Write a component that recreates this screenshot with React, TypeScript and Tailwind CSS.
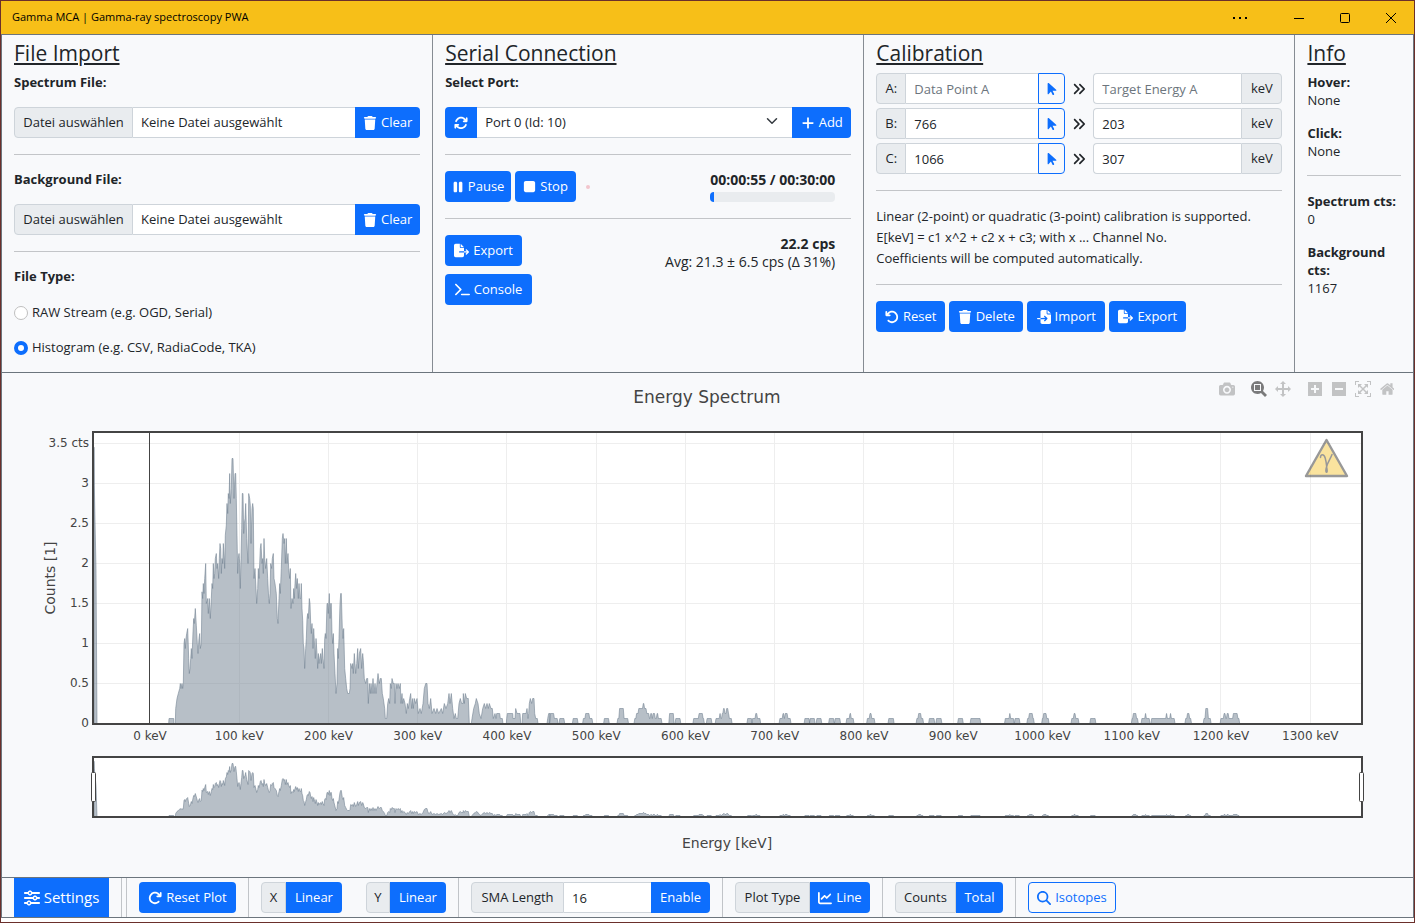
import { Fragment, type ReactNode } from "react";
import {
  FaAnglesRight,
  FaArrowPointer,
  FaArrowRotateLeft,
  FaArrowRotateRight,
  FaArrowsRotate,
  FaChartLine,
  FaFileExport,
  FaFileImport,
  FaMagnifyingGlass,
  FaPause,
  FaPlus,
  FaSliders,
  FaStop,
  FaTerminal,
  FaTrash,
} from "react-icons/fa6";

type Point = [number, number];

/* ---------- Spectrum trace ---------- */

const BASE_Y = 723.5;

// Pairs of "offset,height"; both in thirds of a chart unit.
const LOW_ENERGY =
  "162,829 163,715 168,465 171,0 386,0 387,15 401,15 402,0 406,0 407,45 411,75 415,90 419,105 421,120 423,105 426,120 428,105 430,120 432,240 434,255 436,225 438,255 440,270 443,285 446,195 448,150 450,165 452,195 454,225 456,195 459,275 461,315 463,300 466,345 469,295 472,240 474,210 477,255 479,270 481,225 484,240 486,395 488,375 490,420 492,390 494,435 497,480 499,360 503,375 505,330 508,375 511,315 514,375 516,420 518,405 520,480 522,435 524,450 526,495 529,510 531,465 533,480 536,435 538,495 540,540 542,525 544,450 546,495 548,480 550,540 552,510 554,465 556,565 559,595 561,660 563,630 565,690 567,675 569,750 571,660 574,705 576,795 579,795 582,675 585,750 587,750 589,675 591,565 593,450 595,495 597,510 599,480 601,405 603,495 605,585 607,690 609,690 611,570 613,600 615,615 617,660 620,555 624,480 626,690 629,675 631,655 633,540 636,645 638,660 640,645 642,435 645,465 648,405 650,360 653,405 655,465 657,435 659,480 661,525 663,540 666,480 668,495 670,450 672,555 674,495 677,465 680,495 683,435 686,375 688,360 690,390 692,480 695,465 697,495 700,510 702,435 705,420 709,390 712,315 714,300 717,375 719,420 721,390 724,465 727,555 729,570 732,540 734,555 736,480 739,555 741,480 744,510 746,465 749,435 751,465 753,345 756,375 759,360 761,405 763,375 765,420 767,450 770,405 772,435 775,375 777,420 780,375";

const MID_ENERGY =
  "32,375 34,420 36,345 38,310 40,240 42,225 44,165 47,225 49,255 51,315 53,330 55,315 58,375 60,360 62,300 64,270 66,300 69,225 71,285 73,250 76,195 78,255 81,210 83,165 85,210 87,180 89,195 92,210 94,180 97,225 99,195 102,165 104,255 106,270 108,255 111,360 113,360 115,330 118,390 120,315 122,360 124,360 126,270 128,240 130,270 132,210 135,150 138,90 141,120 143,225 145,195 147,255 150,360 152,390 154,390 157,285 159,255 161,285 164,165 167,135 170,105 173,90 178,90 180,105 182,180 186,165 188,180 190,150 193,210 195,180 197,150 200,180 203,225 205,165 208,210 212,225 215,165 218,210 220,190 223,135 227,120 230,135 233,135 235,60 238,120 241,90 243,120 246,90 249,135 252,90 255,120 258,90 261,120 264,150 268,120 271,135 274,135 277,90 280,75 284,45 286,15 290,15 293,60 296,75 299,60 301,120 304,105 306,135 310,120 313,120 315,60 318,120 321,105 324,120 328,105 331,120 333,60 336,90 338,60 341,75 345,60 349,30 352,60 355,45 359,75 362,90 365,45 368,75 370,45 373,75 377,60 381,75 385,30 390,45 394,30 399,60 403,105 407,120 411,120 414,60 418,45 422,75 426,30 432,45 437,30 441,45 446,30 454,45 458,30 463,60 468,45 473,60 477,90 480,60 484,90 488,45 492,15 496,30 499,15 503,15 507,60 511,75 515,60 519,60 520,90 523,60 526,90 530,75 535,75 538,0 544,0 546,15 551,45 556,60 559,75 564,60 568,30 573,15 578,45 583,60 587,45 591,60 595,45 598,60 603,45 607,45 610,15 615,30 618,15 620,30 629,30 631,15 637,15 639,0 649,0 650,15 652,30 668,30 669,15 675,15 677,45 681,30 690,30 692,0 696,0 698,30 708,30 711,45 714,15 716,30 718,60 721,75 725,60 728,75 732,75 734,30 737,15 742,15 744,0 771,0 773,15 776,30 780,30";

// Isolated groups above 450 keV: each group starts at the first offset and ends
// at the last number; every pair is "offset,counts" held until the next one.
const HIGH_ENERGY =
  "0,2 9,1 17|21,1 32|51,1 62|74,1 79,2 88,1 95|121,1 132|151,1 155,3 165,1 175|189,1 193,2 198,3 208,4 211,3 216,2 222,1 225,2 228,1 230,2 235,1 239,2 242,1 250|267,2 277,0 281,1 292|321,1 333,2 342,1 345|351,1 362|371,1 380,2 382,1 385,2 388,3 391,2 395,3 399,2 401,1 407|442,1 452|453,1 460,2 464,1 471|514,1 521,2 524,1 526,2 532,1 539|570,1 581|582,1 593|597,1 608|625,1 636|638,1 650|664,1 671,2 674,1 680|710,1 716,2 720,1 727|758,1 770|821,1 825,2 831,1 836|849,1 861|865,1 877|914,1 925|942,1 964|1019,1 1029,2 1031,1 1039|1041,1 1052|1069,1 1073,2 1081,1 1084|1102,1 1105,2 1112,1 1117|1168,1 1173,2 1177,1 1184|1210,1 1222|1303,1 1306,2 1313,1 1317|1325,1 1333,2 1335,1 1343|1347,1 1380,2 1382,1 1389,2 1391,1 1399|1423,1 1427,2 1432,1 1436|1464,1 1468,3 1474,1 1480|1502,1 1509,2 1513,1 1516,2 1520,1 1530,2 1540,1 1544";

function parseTrace(data: string, origin: number): Point[] {
  return data.split(" ").map((pair) => {
    const [x, h] = pair.split(",").map(Number);
    return [origin + x / 3, h / 3];
  });
}

function parseGroups(data: string): Point[] {
  const points: Point[] = [];
  for (const group of data.split("|")) {
    let height = 0;
    for (const item of group.split(" ")) {
      const [offset, counts = 0] = item.split(",").map(Number);
      const x = 550 + offset / 2.24;
      points.push([x - 0.4, height], [x + 0.4, counts * 5]);
      height = counts * 5;
    }
  }
  return points;
}

const TRACE: Point[] = [
  ...parseTrace(LOW_ENERGY, 40),
  ...parseTrace(MID_ENERGY, 290),
  ...parseGroups(HIGH_ENERGY),
];

function tracePath(base: number, scale: number) {
  const body = TRACE.map(([x, h]) => `L${x.toFixed(1)} ${(base - h * scale).toFixed(1)}`).join("");
  return `M94 ${base}${body}`;
}

const Y_TICKS = ["0", "0.5", "1", "1.5", "2", "2.5", "3", "3.5 cts"];
const X_TICKS = Array.from({ length: 14 }, (_, i) => i * 100);

function SpectrumChart() {
  return (
    <svg viewBox="2 373 1411 504" className="block w-full font-['DejaVu_Sans',sans-serif]" role="img" aria-label="Energy Spectrum">
      <text x="707" y="403" textAnchor="middle" fontSize="17" fill="#444">Energy Spectrum</text>
      <rect x="93" y="432" width="1269" height="292" fill="#fff" />
      <g stroke="#eee" shapeRendering="crispEdges">
        {Y_TICKS.map((t, i) => (
          <line key={t} x1="94" x2="1361" y1={BASE_Y - i * 40} y2={BASE_Y - i * 40} />
        ))}
        {X_TICKS.slice(1).map((t) => {
          const x = Math.floor(149.8 + t * 0.8925) + 0.5;
          return <line key={t} x1={x} x2={x} y1="433" y2="723" />;
        })}
      </g>
      <line x1="149.5" x2="149.5" y1="433" y2="723" stroke="#444" />
      <path d={tracePath(BASE_Y, 1)} fill="#708090" fillOpacity="0.5" stroke="#708090" strokeOpacity="0.7" strokeWidth="0.8" />
      <rect x="93" y="432" width="1269" height="292" fill="none" stroke="#444" strokeWidth="2" />

      <g fontSize="12" fill="#444">
        {Y_TICKS.map((t, i) => (
          <text key={t} x="89" y={727 - i * 40} textAnchor="end">{t}</text>
        ))}
        {X_TICKS.map((t) => (
          <text key={t} x={150 + t * 0.8925} y="740" textAnchor="middle">{`${t} keV`}</text>
        ))}
      </g>
      <g fontSize="14" fill="#444" textAnchor="middle">
        <text transform="translate(55 578) rotate(-90)">Counts [1]</text>
        <text x="727" y="848">Energy [keV]</text>
      </g>

      <g opacity="0.5" strokeLinejoin="round" strokeLinecap="round">
        <path d="M1326.5 440L1347 476H1306Z" fill="#f6c840" stroke="#333" strokeWidth="2.4" />
        <path d="M1320.5 457.5C1320.5 454 1324 453.5 1325.2 458C1326 461 1326.4 463 1326.6 466M1332 454.5C1330.5 458.5 1328 462 1326.8 466" fill="none" stroke="#333" strokeWidth="1.5" />
        <path d="M1326.6 464C1325.4 468 1324.8 470 1325.3 472C1325.8 473.4 1327.4 473.4 1327.8 472C1328.2 470 1327.4 467 1326.6 464Z" fill="#333" />
      </g>

      <rect x="93" y="757" width="1269" height="60" fill="#fff" />
      <path d={tracePath(816.5, 0.2)} fill="#708090" fillOpacity="0.5" stroke="#708090" strokeOpacity="0.7" strokeWidth="0.8" />
      <rect x="93" y="757" width="1269" height="60" fill="none" stroke="#444" strokeWidth="2" />
      <g fill="#fff" stroke="#444">
        <rect x="91.5" y="772.5" width="4" height="29" rx="1" />
        <rect x="1359.5" y="772.5" width="4" height="29" rx="1" />
      </g>
    </svg>
  );
}

/* ---------- Plot mode bar ---------- */

const MODE_ICONS = {
  camera: {
    width: 1000,
    d: "m500 450c-83 0-150-67-150-150 0-83 67-150 150-150 83 0 150 67 150 150 0 83-67 150-150 150z m400 150h-120c-16 0-34 13-39 29l-31 93c-6 15-23 28-40 28h-340c-16 0-34-13-39-28l-31-94c-6-15-23-28-40-28h-120c-55 0-100-45-100-100v-450c0-55 45-100 100-100h800c55 0 100 45 100 100v450c0 55-45 100-100 100z m-400-550c-138 0-250 112-250 250 0 138 112 250 250 250 138 0 250-112 250-250 0-138-112-250-250-250z m365 380c-19 0-35 16-35 35 0 19 16 35 35 35 19 0 35-16 35-35 0-19-16-35-35-35z",
  },
  zoom: {
    width: 1000,
    d: "m1000-25l-250 251c40 63 63 138 63 218 0 224-182 406-407 406-224 0-406-182-406-406s183-406 407-406c80 0 155 22 218 62l250-250 125 125z m-812 250l0 438 437 0 0-438-437 0z m62 375l313 0 0-312-313 0 0 312z",
  },
  pan: {
    width: 1000,
    d: "m1000 350l-187 188 0-125-250 0 0 250 125 0-188 187-187-187 125 0 0-250-250 0 0 125-188-188 186-187 0 125 252 0 0-250-125 0 187-188 188 188-125 0 0 250 250 0 0-126 187 188z",
  },
  plus: {
    width: 875,
    d: "m1 787l0-875 875 0 0 875-875 0z m687-500l-187 0 0-187-125 0 0 187-188 0 0 125 188 0 0 187 125 0 0-187 187 0 0-125z",
  },
  minus: {
    width: 875,
    d: "m0 788l0-876 875 0 0 876-875 0z m688-500l-500 0 0 125 500 0 0-125z",
  },
  autoscale: {
    width: 1000,
    d: "m250 850l-187 0-63 0 0-62 0-188 63 0 0 188 187 0 0 62z m688 0l-188 0 0-62 188 0 0-188 62 0 0 188 0 62-62 0z m-875-938l0 188-63 0 0-188 0-62 63 0 187 0 0 62-187 0z m875 188l0-188-188 0 0-62 188 0 62 0 0 62 0 188-62 0z m-125 188l-1 0-93-94-156 156 156 156 92-93 2 0 0 250-250 0 0-2 93-92-156-156-156 156 94 92 0 2-250 0 0-250 0 0 93 93 157-156-157-156-93 94 0 0 0-250 250 0 0 0-94 93 156 157 156-157-93-93 0 0 250 0 0 250z",
  },
  home: {
    width: 928,
    d: "m786 296v-267q0-15-11-26t-25-10h-214v214h-143v-214h-214q-15 0-25 10t-11 26v267q0 1 0 2t0 2l321 264 321-264q1-1 1-4z m124 39l-34-41q-5-5-12-6h-2q-7 0-12 3l-386 322-386-322q-7-4-13-4-7 2-12 7l-35 41q-4 5-3 13t6 12l401 334q18 15 42 15t43-15l136-114v109q0 8 5 13t13 5h107q8 0 13-5t5-13v-227l122-102q5-5 6-12t-4-13z",
  },
};

function ModeButton({ icon, label, active }: { icon: keyof typeof MODE_ICONS; label: string; active?: boolean }) {
  const { width, d } = MODE_ICONS[icon];
  return (
    <button type="button" aria-label={label} className={active ? "w-4 text-[#444]/70" : "w-4 text-[#444]/30"}>
      <svg viewBox={`0 0 ${width} 1000`} className="mx-auto block h-4" fill="currentColor">
        <path transform="matrix(1 0 0 -1 0 850)" d={d} />
      </svg>
    </button>
  );
}

function ModeBar() {
  return (
    <div className="absolute top-2 right-[18px] flex gap-4">
      <ModeButton icon="camera" label="Download plot as a png" />
      <div className="flex gap-2">
        <ModeButton icon="zoom" label="Zoom" active />
        <ModeButton icon="pan" label="Pan" />
      </div>
      <div className="flex gap-2">
        <ModeButton icon="plus" label="Zoom in" />
        <ModeButton icon="minus" label="Zoom out" />
        <ModeButton icon="autoscale" label="Autoscale" />
        <ModeButton icon="home" label="Reset axes" />
      </div>
    </div>
  );
}

/* ---------- Shared controls ---------- */

function Button({ className = "", children, label }: { className?: string; children: ReactNode; label?: string }) {
  return (
    <button
      type="button"
      aria-label={label}
      className={`flex h-[31px] shrink-0 items-center justify-center gap-1 bg-[#0d6efd] whitespace-nowrap text-white ${className}`}
    >
      {children}
    </button>
  );
}

function Heading({ children, className = "mb-2" }: { children: ReactNode; className?: string }) {
  return (
    <h2 className={`text-[21px] leading-6 font-medium underline decoration-2 underline-offset-2 ${className}`}>{children}</h2>
  );
}

function Rule({ className = "my-4" }: { className?: string }) {
  return <hr className={`border-t border-[#c3c5c8] ${className}`} />;
}

const LABEL = "mb-4 leading-[17px] font-bold";
const ADDON = "flex h-[31px] shrink-0 items-center justify-center border border-[#ced4da] bg-[#e9ecef] whitespace-nowrap";
const FIELD = "h-[31px] min-w-0 border-y border-[#ced4da] bg-white px-2 placeholder:text-[#6c757d]";

function FilePicker({ id, title }: { id: string; title: string }) {
  return (
    <>
      <h3 className={LABEL}>{title}</h3>
      <div className="flex">
        <input id={id} type="file" className="sr-only" />
        <label htmlFor={id} className="flex min-w-0 flex-1">
          <span className={`${ADDON} w-[119px] rounded-l`}>Datei auswählen</span>
          <span className={`${FIELD} flex flex-1 items-center`}>Keine Datei ausgewählt</span>
        </label>
        <Button className="w-[65px] rounded-r">
          <FaTrash size={14} /> Clear
        </Button>
      </div>
    </>
  );
}

function Radio({ id, label, checked }: { id: string; label: string; checked?: boolean }) {
  return (
    <div className="flex h-6 items-center gap-1">
      <input
        id={id}
        type="radio"
        name="file-type"
        defaultChecked={checked}
        className="size-3.5 appearance-none rounded-full border border-[#bfbfbf] bg-white checked:border-4 checked:border-[#0d6efd]"
      />
      <label htmlFor={id}>{label}</label>
    </div>
  );
}

function CalibrationRow({ name, point, energy }: { name: string; point?: string; energy?: string }) {
  return (
    <div className="flex items-center">
      <div className="flex min-w-0 flex-[189]">
        <label htmlFor={`point-${name}`} className={`${ADDON} w-[30px] rounded-l`}>{name}:</label>
        <input id={`point-${name}`} className={`${FIELD} flex-1`} placeholder={`Data Point ${name}`} defaultValue={point} />
        <button type="button" aria-label={`Pick point ${name}`} className="flex h-[31px] w-[27px] shrink-0 items-center justify-center rounded-r border border-[#0d6efd] text-[#0d6efd]">
          <FaArrowPointer size={14} />
        </button>
      </div>
      <div className="flex w-7 shrink-0 justify-center">
        <FaAnglesRight size={14} />
      </div>
      <div className="flex min-w-0 flex-[189]">
        <input
          id={`energy-${name}`}
          aria-label={`Target energy ${name}`}
          className={`${FIELD} flex-1 rounded-l border-l`}
          placeholder={`Target Energy ${name}`}
          defaultValue={energy}
        />
        <label htmlFor={`energy-${name}`} className={`${ADDON} w-[41px] rounded-r`}>keV</label>
      </div>
    </div>
  );
}

function InfoItem({ title, value }: { title: string; value: string }) {
  return (
    <div className="leading-[18px]">
      <dt className="font-bold">{title}</dt>
      <dd>{value}</dd>
    </div>
  );
}

/* ---------- Page sections ---------- */

function TitleBar() {
  return (
    <header className="flex h-[33px] items-center justify-between bg-[#f7bf18] pr-[18px] pl-[11px] text-black">
      <span className="text-[11px]">Gamma MCA | Gamma-ray spectroscopy PWA</span>
      <div className="flex items-center gap-9">
        <button type="button" aria-label="More" className="mr-[11px]">
          <svg viewBox="0 0 14 10" className="h-2.5 w-3.5"><path d="M0 4h2v2H0zM6 4h2v2H6zM12 4h2v2h-2z" /></svg>
        </button>
        <button type="button" aria-label="Minimize">
          <svg viewBox="0 0 10 10" className="size-2.5" stroke="#000"><path d="M0 5.5H10" /></svg>
        </button>
        <button type="button" aria-label="Maximize">
          <svg viewBox="0 0 10 10" className="size-2.5" fill="none" stroke="#000"><rect x="0.5" y="0.5" width="9" height="9" rx="1" /></svg>
        </button>
        <button type="button" aria-label="Close">
          <svg viewBox="0 0 10 10" className="size-2.5" stroke="#000"><path d="M0 0L10 10M10 0L0 10" /></svg>
        </button>
      </div>
    </header>
  );
}

const PANEL = "min-w-0 px-3 pt-1.5 pb-3";

function ControlPanels() {
  return (
    <div className="grid grid-cols-[11fr_11fr_11fr_3fr] divide-x divide-[#868c93] border-b border-[#6c757d]">
      <section className={PANEL}>
        <Heading className="mb-[9px]">File Import</Heading>
        <FilePicker id="spectrum-file" title="Spectrum File:" />
        <Rule />
        <FilePicker id="background-file" title="Background File:" />
        <Rule />
        <h3 className={LABEL}>File Type:</h3>
        <div className="flex flex-col gap-[11px]">
          <Radio id="type-raw" label="RAW Stream (e.g. OGD, Serial)" />
          <Radio id="type-histogram" label="Histogram (e.g. CSV, RadiaCode, TKA)" checked />
        </div>
      </section>

      <section className={PANEL}>
        <Heading className="mb-[9px]">Serial Connection</Heading>
        <h3 className={LABEL}>
          <label htmlFor="port">Select Port:</label>
        </h3>
        <div className="flex">
          <Button className="w-8 rounded-l" label="Refresh ports">
            <FaArrowsRotate size={14} />
          </Button>
          <div className="relative flex min-w-0 flex-1">
            <select id="port" className={`${FIELD} w-full appearance-none`}>
              <option>Port 0 (Id: 10)</option>
            </select>
            <svg viewBox="0 0 16 16" className="pointer-events-none absolute top-2 right-3.5 size-3" fill="none" stroke="#343a40" strokeWidth="2" strokeLinecap="round" strokeLinejoin="round">
              <path d="m2 5 6 6 6-6" />
            </svg>
          </div>
          <Button className="w-[59px] rounded-r">
            <FaPlus size={14} /> Add
          </Button>
        </div>
        <Rule />
        <div className="flex items-center justify-between pr-4">
          <div className="flex items-center gap-1">
            <Button className="w-[66px] rounded">
              <FaPause size={14} className="-mx-px" /> Pause
            </Button>
            <Button className="w-[61px] rounded">
              <FaStop size={15} className="-mx-px" /> Stop
            </Button>
            <span className="ml-1.5 size-1 rounded-full bg-[#f3c6cd]" />
          </div>
          <div className="flex flex-col gap-[3px]">
            <div className="text-sm leading-[18px] font-bold">00:00:55 / 00:30:00</div>
            <div className="h-2.5 w-full overflow-hidden rounded bg-[#e9ecef]" role="progressbar" aria-label="Recording progress" aria-valuenow={3}>
              <div className="h-full w-[3%] bg-[#0d6efd]" />
            </div>
          </div>
        </div>
        <Rule />
        <div className="flex items-start justify-between pr-4">
          <div className="flex flex-col items-start gap-2">
            <Button className="w-[77px] rounded">
              <FaFileExport size={15} /> Export
            </Button>
            <Button className="w-[87px] rounded">
              <FaTerminal size={15} /> Console
            </Button>
          </div>
          <div className="text-right text-sm leading-[18px]">
            <div className="font-bold">22.2 cps</div>
            <div>Avg: 21.3 ± 6.5 cps (Δ 31%)</div>
          </div>
        </div>
      </section>

      <section className={PANEL}>
        <Heading>Calibration</Heading>
        <div className="flex flex-col gap-1">
          <CalibrationRow name="A" />
          <CalibrationRow name="B" point="766" energy="203" />
          <CalibrationRow name="C" point="1066" energy="307" />
        </div>
        <Rule className="mt-4 mb-[15px]" />
        <p className="leading-[21px]">
          Linear (2-point) or quadratic (3-point) calibration is supported.
          <br />
          E[keV] = c1 x^2 + c2 x + c3; with x ... Channel No.
          <br />
          Coefficients will be computed automatically.
        </p>
        <Rule className="mt-[15px] mb-4" />
        <div className="flex gap-1">
          <Button className="w-[69px] rounded">
            <FaArrowRotateLeft size={14} /> Reset
          </Button>
          <Button className="w-[74px] rounded">
            <FaTrash size={14} /> Delete
          </Button>
          <Button className="w-[78px] rounded">
            <FaFileImport size={14} /> Import
          </Button>
          <Button className="w-[77px] rounded">
            <FaFileExport size={15} /> Export
          </Button>
        </div>
      </section>

      <section className={PANEL}>
        <Heading>Info</Heading>
        <dl className="flex flex-col gap-[15px]">
          <InfoItem title="Hover:" value="None" />
          <InfoItem title="Click:" value="None" />
        </dl>
        <Rule className="mt-[15px] mb-4" />
        <dl className="flex flex-col gap-[15px]">
          <InfoItem title="Spectrum cts:" value="0" />
          <InfoItem title="Background cts:" value="1167" />
        </dl>
      </section>
    </div>
  );
}

function Divider() {
  return <div className="w-px shrink-0 self-stretch bg-[#c1c4c8]" />;
}

function Toolbar() {
  const axes = [
    { name: "X", width: "w-[25px]" },
    { name: "Y", width: "w-6" },
  ];
  return (
    <footer className="flex h-[41px] items-center gap-3 border-y border-[#6c757d] pl-3">
      <button type="button" className="flex w-[95px] shrink-0 items-center justify-center gap-1 self-stretch bg-[#0d6efd] text-[15px] text-white">
        <FaSliders size={16} /> Settings
      </button>
      <div className="flex shrink-0 gap-1 self-stretch">
        <Divider />
        <Divider />
      </div>
      <Button className="w-[97px] rounded">
        <FaArrowRotateRight size={14} /> Reset Plot
      </Button>
      <Divider />
      <div className="flex gap-6">
        {axes.map(({ name, width }) => (
          <div key={name} className="flex">
            <span className={`${ADDON} ${width} rounded-l`}>{name}</span>
            <Button className="w-14 rounded-r">Linear</Button>
          </div>
        ))}
      </div>
      <Divider />
      <div className="flex shrink-0">
        <label htmlFor="sma" className={`${ADDON} w-[93px] rounded-l`}>SMA Length</label>
        <input id="sma" className={`${FIELD} w-[87px]`} defaultValue="16" />
        <Button className="w-[59px] rounded-r">Enable</Button>
      </div>
      {[
        { name: "Plot Type", width: "w-[75px]", button: <Button className="w-[60px] rounded-r"><FaChartLine size={14} /> Line</Button> },
        { name: "Counts", width: "w-[61px]", button: <Button className="w-[47px] rounded-r">Total</Button> },
      ].map(({ name, width, button }) => (
        <Fragment key={name}>
          <Divider />
          <div className="flex">
            <span className={`${ADDON} ${width} rounded-l`}>{name}</span>
            {button}
          </div>
        </Fragment>
      ))}
      <Divider />
      <button type="button" className="flex h-[31px] w-[88px] shrink-0 items-center justify-center gap-1 rounded border border-[#0d6efd] text-[#0d6efd]">
        <FaMagnifyingGlass size={14} /> Isotopes
      </button>
    </footer>
  );
}

export default function App() {
  return (
    <div className="flex min-h-screen flex-col border border-[#6b2f2b] bg-white font-['Open_Sans','Noto_Sans',sans-serif] text-[13px] text-[#212529]">
      <TitleBar />
      <main className="border-x border-t border-[#6c757d] bg-[#f8f9fb]">
        <ControlPanels />
        <div className="relative">
          <SpectrumChart />
          <ModeBar />
        </div>
        <Toolbar />
      </main>
    </div>
  );
}
